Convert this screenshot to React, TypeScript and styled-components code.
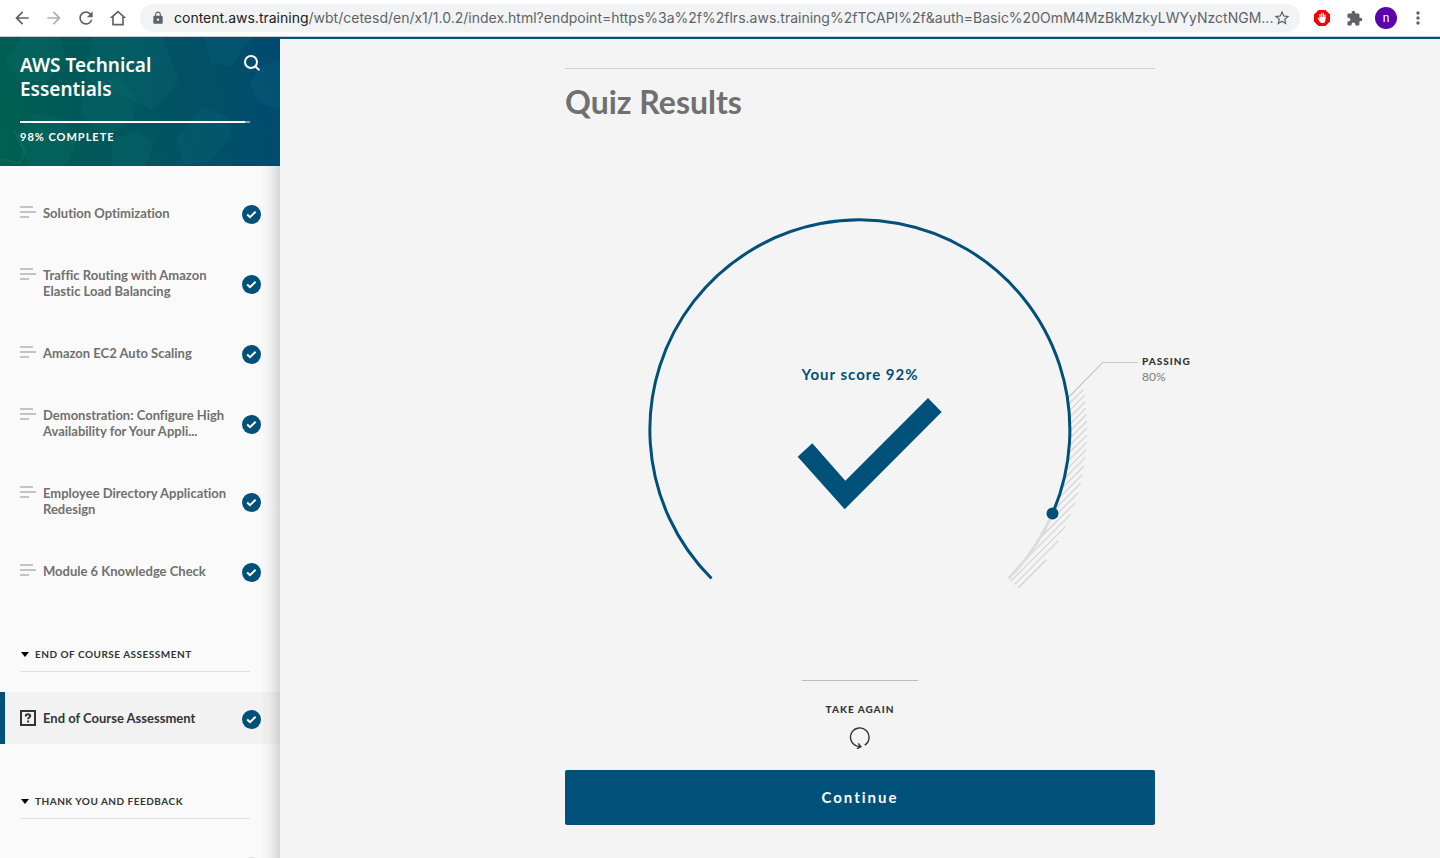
import React from 'react';
import styled, { createGlobalStyle } from 'styled-components';
import { MdArrowBack, MdArrowForward, MdRefresh, MdLock, MdStarBorder, MdExtension, MdMoreVert } from 'react-icons/md';

const BLUE = '#005179';
const INK = '#313537';

const GlobalStyle = createGlobalStyle`
  *, *::before, *::after { box-sizing: border-box; }
  body { margin: 0; background: #f4f4f4; font-family: Lato, "Liberation Sans", sans-serif; font-variant-ligatures: none; }
  button { font: inherit; color: inherit; border: 0; padding: 0; background: none; cursor: pointer; }
  h1, h2, h3, p, ul { margin: 0; padding: 0; }
  ul { list-style: none; }
  a { color: inherit; text-decoration: none; }
  svg { display: block; }
`;

const Shell = styled.div`
  display: flex;
  flex-direction: column;
  height: 100vh;
  overflow: hidden;
`;

/* ---------- browser bar ---------- */

const BrowserBar = styled.header`
  display: flex;
  align-items: center;
  flex: none;
  height: 37px;
  padding: 0 12px;
  background: #fff;
  border-bottom: 1px solid #c9cccf;
  color: #5f6368;
`;

const NavButtons = styled.nav`
  display: flex;
  gap: 12px;
  margin-right: 12px;
`;

const BarButton = styled.button<{ $faded?: boolean }>`
  display: grid;
  place-items: center;
  flex: none;
  width: 20px;
  height: 28px;
  opacity: ${(p) => (p.$faded ? 0.5 : 1)};
`;

const AddressBar = styled.div`
  display: flex;
  align-items: center;
  flex: 1;
  min-width: 0;
  height: 28px;
  padding: 0 8px 0 11px;
  border-radius: 14px;
  background: #f1f3f4;
`;

const Address = styled.span`
  flex: 1;
  min-width: 0;
  margin: 0 -4px 0 9px;
  overflow: hidden;
  white-space: nowrap;
  text-overflow: ellipsis;
  font: 14px/20px Inter, "Liberation Sans", sans-serif;
`;

const Host = styled.span`
  color: #202124;
`;

const Extensions = styled.div`
  display: flex;
  align-items: center;
  gap: 12px;
  margin-left: 12px;
`;

const Avatar = styled.button`
  width: 22px;
  height: 22px;
  margin: 0 -1px;
  border-radius: 50%;
  background: #5c00b0;
  color: #fff;
  font: 12px/22px Roboto, sans-serif;
`;

/* ---------- sidebar ---------- */

const Body = styled.div`
  display: flex;
  flex: 1;
  min-height: 0;
`;

const Sidebar = styled.aside`
  position: relative;
  flex: none;
  width: 280px;
  overflow: hidden;
  background: #fafafa;

  &::after {
    content: '';
    position: absolute;
    inset: 129px 0 0 auto;
    width: 20px;
    background: linear-gradient(to right, rgba(0, 0, 0, 0), rgba(0, 0, 0, 0.04) 50%, rgba(0, 0, 0, 0.14));
    pointer-events: none;
  }
`;

const CourseHeader = styled.div`
  position: relative;
  height: 129px;
  padding: 16px 20px 0;
  color: #fff;
  background: linear-gradient(80deg, #006052 0%, #00585a 35%, #005263 66%, #004a72 100%);
`;

const Pattern = styled.svg`
  position: absolute;
  inset: 0;
  width: 100%;
  height: 100%;
`;

const TitleRow = styled.div`
  position: relative;
  display: flex;
  justify-content: space-between;
  align-items: flex-start;
`;

const CourseTitle = styled.h1`
  width: 160px;
  font: 600 19px/24px "Noto Sans", "Open Sans", sans-serif;
`;

const SearchButton = styled.button`
  margin-top: 2px;
`;

const Progress = styled.div`
  position: relative;
  width: 230px;
  height: 2px;
  margin: 20px 0 6px;
  background: rgba(255, 255, 255, 0.5);
`;

const ProgressFill = styled.div`
  height: 100%;
  background: #fff;
`;

const ProgressText = styled.p`
  position: relative;
  font-weight: 700;
  font-size: 11px;
  line-height: 16px;
  letter-spacing: 1px;
`;

const LessonList = styled.ul<{ $first?: boolean }>`
  display: grid;
  gap: 10px;
  padding-top: ${(p) => (p.$first ? 21 : 20)}px;
`;

const Lesson = styled.a<{ $active?: boolean }>`
  display: flex;
  align-items: center;
  gap: 7px;
  min-height: 52px;
  padding: 0 19px 0 ${(p) => (p.$active ? 15 : 20)}px;
  border-left: ${(p) => (p.$active ? `5px solid ${BLUE}` : '0')};
  background: ${(p) => (p.$active ? '#f2f2f2' : 'transparent')};
  color: ${(p) => (p.$active ? INK : '#707070')};

  & > svg:first-child { align-self: flex-start; flex: none; margin-top: 18px; }
`;

const LessonName = styled.span`
  flex: 1;
  padding: 18px 0;
  font-weight: 700;
  font-size: 13px;
  line-height: 16px;
`;

const Badge = styled.span<{ $open?: boolean }>`
  display: grid;
  place-items: center;
  flex: none;
  width: 19px;
  height: 19px;
  margin-top: 3px;
  margin-left: auto;
  border-radius: 50%;
  border: ${(p) => (p.$open ? '2px solid #dedede' : '0')};
  background: ${(p) => (p.$open ? 'transparent' : BLUE)};
`;

const SectionHead = styled.button`
  display: flex;
  align-items: center;
  gap: 6px;
  width: 230px;
  margin: 49px 0 0 20px;
  padding: 0 1px 9px;
  border-bottom: 1px solid #e1e1e1;
  color: ${INK};
  font-weight: 700;
  font-size: 10px;
  line-height: 16px;
  letter-spacing: 0.05em;
`;

/* ---------- results ---------- */

const Main = styled.main`
  flex: 1;
  min-width: 0;
  border-top: 2px solid ${BLUE};
  background: #f4f4f4;
`;

const Column = styled.div`
  display: flex;
  flex-direction: column;
  max-width: 590px;
  margin: 29px auto 32px;
  border-top: 1px solid #d2d2d2;
`;

const Heading = styled.h2`
  margin: 13px 0 88px;
  color: #707070;
  font-weight: 700;
  font-size: 32px;
  line-height: 40px;
`;

const Gauge = styled.section`
  position: relative;
  display: grid;
  justify-items: center;

  & > * { grid-area: 1 / 1; }
`;

const Score = styled.p`
  margin-top: 156px;
  color: ${BLUE};
  font-weight: 700;
  font-size: 15px;
  line-height: 16px;
  letter-spacing: 1px;
`;

const PassMark = styled.div`
  position: absolute;
  top: 143px;
  left: calc(50% + 282px);
  color: ${INK};
  line-height: 16px;
`;

const Caption = styled.span`
  display: block;
  font-weight: 900;
  font-size: 10px;
  line-height: 16px;
  letter-spacing: 1px;
`;

const PassValue = styled.span`
  display: block;
  color: #7c7c7c;
  font-size: 12px;
`;

const Retake = styled.button`
  display: flex;
  flex-direction: column;
  align-items: center;
  align-self: center;
  gap: 10px;
  width: 116px;
  margin: 80px 0 21px;
  padding-top: 20px;
  border-top: 1px solid #bcbcbc;
  color: ${INK};
`;

const Continue = styled.button`
  height: 55px;
  padding-bottom: 2px;
  border-radius: 2px;
  background: ${BLUE};
  color: #fff;
  font-weight: 700;
  font-size: 15px;
  letter-spacing: 2px;
`;

/* ---------- drawings ---------- */

const HomeIcon = () => (
  <svg width="20" height="20" viewBox="0 0 24 24" fill="none" stroke="currentColor" strokeWidth="2">
    <path d="M12 4.3 4.6 11H6v9h12v-9h1.4z" />
  </svg>
);

const BlockerIcon = () => (
  <svg width="18" height="18" viewBox="0 0 18 18">
    <path d="M5.6 1h6.8L17 5.6v6.8L12.4 17H5.6L1 12.4V5.6z" fill="#f40000" />
    <path d="M7 9V5.2M8.7 8.5V4M10.4 8.5V4.4M12 9V5.8" stroke="#fff" strokeWidth="1.1" strokeLinecap="round" />
    <path d="M6.5 8h6v2.7c0 2-1 3.4-3 3.4-1.6 0-2.4-.8-3-2.2z" fill="#fff" />
    <path d="m5.3 9.3 1.7 2.7" stroke="#fff" strokeWidth="1.2" strokeLinecap="round" />
  </svg>
);

const SearchIcon = () => (
  <svg width="16" height="17" viewBox="0 0 16 17" fill="none" stroke="#fff" strokeWidth="2">
    <circle cx="7" cy="7" r="6" />
    <path d="m11.2 11.2 4.2 4" />
  </svg>
);

const LinesIcon = () => (
  <svg width="16" height="16" viewBox="0 0 16 16" stroke="#c4c4c4" strokeWidth="2">
    <path d="M0 2h13M0 7h16M0 12h9" />
  </svg>
);

const QuizIcon = () => (
  <svg width="16" height="16" viewBox="0 0 16 16" fill="none" stroke={INK} strokeWidth="2">
    <rect x="1" y="1" width="14" height="14" />
    <path d="M5.8 6.4V6c0-1.1.9-1.800 2.200-1.800s2.200.7 2.200 1.800c0 1.400-2.100 1.500-2.100 3.300M8.100 10.500v2" />
  </svg>
);

const CheckIcon = () => (
  <svg width="19" height="19" viewBox="0 0 19 19" fill="none" stroke="#fff" strokeWidth="2">
    <path d="m5.2 9.6 2.8 2.6 5.6-5.4" />
  </svg>
);

const CaretIcon = () => (
  <svg width="8" height="5" viewBox="0 0 8 5">
    <path d="M0 0h8L4 5z" fill="#000" />
  </svg>
);

const RetakeIcon = () => (
  <svg width="22" height="22" viewBox="0 0 22 22" fill="none" stroke={INK} strokeWidth="1.4">
    <path d="M15.700 18.100A9.300 9.300 0 1 0 7.500 18.900L11.300 19.800" />
    <path d="m9.300 16.300 2.600 3.500-4 1.900" />
  </svg>
);

const R = 210;
const OUTER = 227;
const hatch = Array.from({ length: 20 }, (_, i) => {
  const c = 183 + i * 7;
  const inner = Math.sqrt(Math.max(0, R * R - (c * c) / 2) / 2);
  const outer = Math.sqrt((OUTER * OUTER - (c * c) / 2) / 2);
  return `M${c / 2 + inner} ${c / 2 - inner}L${c / 2 + outer} ${c / 2 - outer}`;
}).join('');

const GaugeDrawing = () => (
  <svg width="440" height="390" viewBox="-220 -220 440 390" fill="none" overflow="visible" aria-hidden="true">
    <path d={hatch} stroke="#d3d3d3" strokeWidth="1.2" />
    <path d="M207.5-31.5 242.500-67.500H278" stroke="#c8c8c8" strokeWidth="1.2" />
    <path d="M192.5 83.500A210 210 0 0 1 148.500 148.500" stroke="#dcdcdc" strokeWidth="3" />
    <path d="M-148.5 148.500A210 210 0 1 1 192.500 83.500" stroke={BLUE} strokeWidth="3" />
    <circle cx="192.5" cy="83.5" r="6" fill={BLUE} />
    <path d="M-47.7 13.3-14.7 50.7 68-32 81.7-18-15.3 79.3-62.3 26.7z" fill={BLUE} />
  </svg>
);

const HeaderPattern = () => (
  <Pattern viewBox="0 0 280 129" preserveAspectRatio="none" aria-hidden="true">
    <g fill="#1f9c98" fillOpacity="0.09">
      <path d="M22 0h38l5 22-18 24-30-4-12-20z" />
      <path d="M92 0h70l17 44-26 30-30-16-39-16z" />
      <path d="M84 50l36-12 17 26-4 18-28 18-24-22z" />
      <path d="M34 76l28 6 14 26-10 21H30l-14-30z" />
      <path d="M112 102l24-8 18 10-8 25h-34z" />
    </g>
    <g fill="#1f8fa0" fillOpacity="0.1">
      <path d="M204 0h50l-12 12-10 18-22-4z" />
      <path d="M202 70l25 9 5 21-22 24-26 4-8-26z" />
      <path d="M258 32l22-10v52l-22-9-8-18z" />
    </g>
    <path d="M0 122l20 4 5-11-11-22" stroke="#3cc39a" strokeOpacity="0.1" strokeWidth="2" fill="none" />
  </Pattern>
);

const lessons = [
  'Solution Optimization',
  'Traffic Routing with Amazon Elastic Load Balancing',
  'Amazon EC2 Auto Scaling',
  'Demonstration: Configure High Availability for Your Appli...',
  'Employee Directory Application Redesign',
  'Module 6 Knowledge Check',
];

const progress = 98;

export default function App() {
  return (
    <Shell>
      <GlobalStyle />
      <BrowserBar>
        <NavButtons aria-label="Browser">
          <BarButton aria-label="Back"><MdArrowBack size={20} /></BarButton>
          <BarButton aria-label="Forward" $faded><MdArrowForward size={20} /></BarButton>
          <BarButton aria-label="Reload"><MdRefresh size={20} /></BarButton>
          <BarButton aria-label="Home"><HomeIcon /></BarButton>
        </NavButtons>
        <AddressBar>
          <MdLock size={14} />
          <Address>
            <Host>content.aws.training</Host>
            /wbt/cetesd/en/x1/1.0.2/index.html?endpoint=https%3a%2f%2flrs.aws.training%2fTCAPI%2f&amp;auth=Basic%20OmM4MzBkMzkyLWYyNzctNGM...
          </Address>
          <BarButton aria-label="Bookmark this page"><MdStarBorder size={18} /></BarButton>
        </AddressBar>
        <Extensions>
          <BarButton aria-label="Ad blocker"><BlockerIcon /></BarButton>
          <BarButton aria-label="Extensions"><MdExtension size={17} /></BarButton>
          <Avatar aria-label="Profile">n</Avatar>
          <BarButton aria-label="Menu"><MdMoreVert size={20} /></BarButton>
        </Extensions>
      </BrowserBar>
      <Body>
        <Sidebar>
          <CourseHeader>
            <HeaderPattern />
            <TitleRow>
              <CourseTitle>AWS Technical Essentials</CourseTitle>
              <SearchButton aria-label="Search"><SearchIcon /></SearchButton>
            </TitleRow>
            <Progress>
              <ProgressFill style={{ width: `${progress}%` }} />
            </Progress>
            <ProgressText>{progress}% COMPLETE</ProgressText>
          </CourseHeader>
          <LessonList $first>
            {lessons.map((name) => (
              <li key={name}>
                <Lesson href="#">
                  <LinesIcon />
                  <LessonName>{name}</LessonName>
                  <Badge><CheckIcon /></Badge>
                </Lesson>
              </li>
            ))}
          </LessonList>
          <SectionHead><CaretIcon />END OF COURSE ASSESSMENT</SectionHead>
          <LessonList>
            <li>
              <Lesson href="#" $active aria-current="page">
                <QuizIcon />
                <LessonName>End of Course Assessment</LessonName>
                <Badge><CheckIcon /></Badge>
              </Lesson>
            </li>
          </LessonList>
          <SectionHead><CaretIcon />THANK YOU AND FEEDBACK</SectionHead>
          <LessonList>
            <li>
              <Lesson href="#" aria-label="Next lesson">
                <LinesIcon />
                <Badge $open />
              </Lesson>
            </li>
          </LessonList>
        </Sidebar>
        <Main>
          <Column>
            <Heading>Quiz Results</Heading>
            <Gauge>
              <GaugeDrawing />
              <Score>Your score 92%</Score>
              <PassMark>
                <Caption>PASSING</Caption>
                <PassValue>80%</PassValue>
              </PassMark>
            </Gauge>
            <Retake>
              <Caption>TAKE AGAIN</Caption>
              <RetakeIcon />
            </Retake>
            <Continue>Continue</Continue>
          </Column>
        </Main>
      </Body>
    </Shell>
  );
}
